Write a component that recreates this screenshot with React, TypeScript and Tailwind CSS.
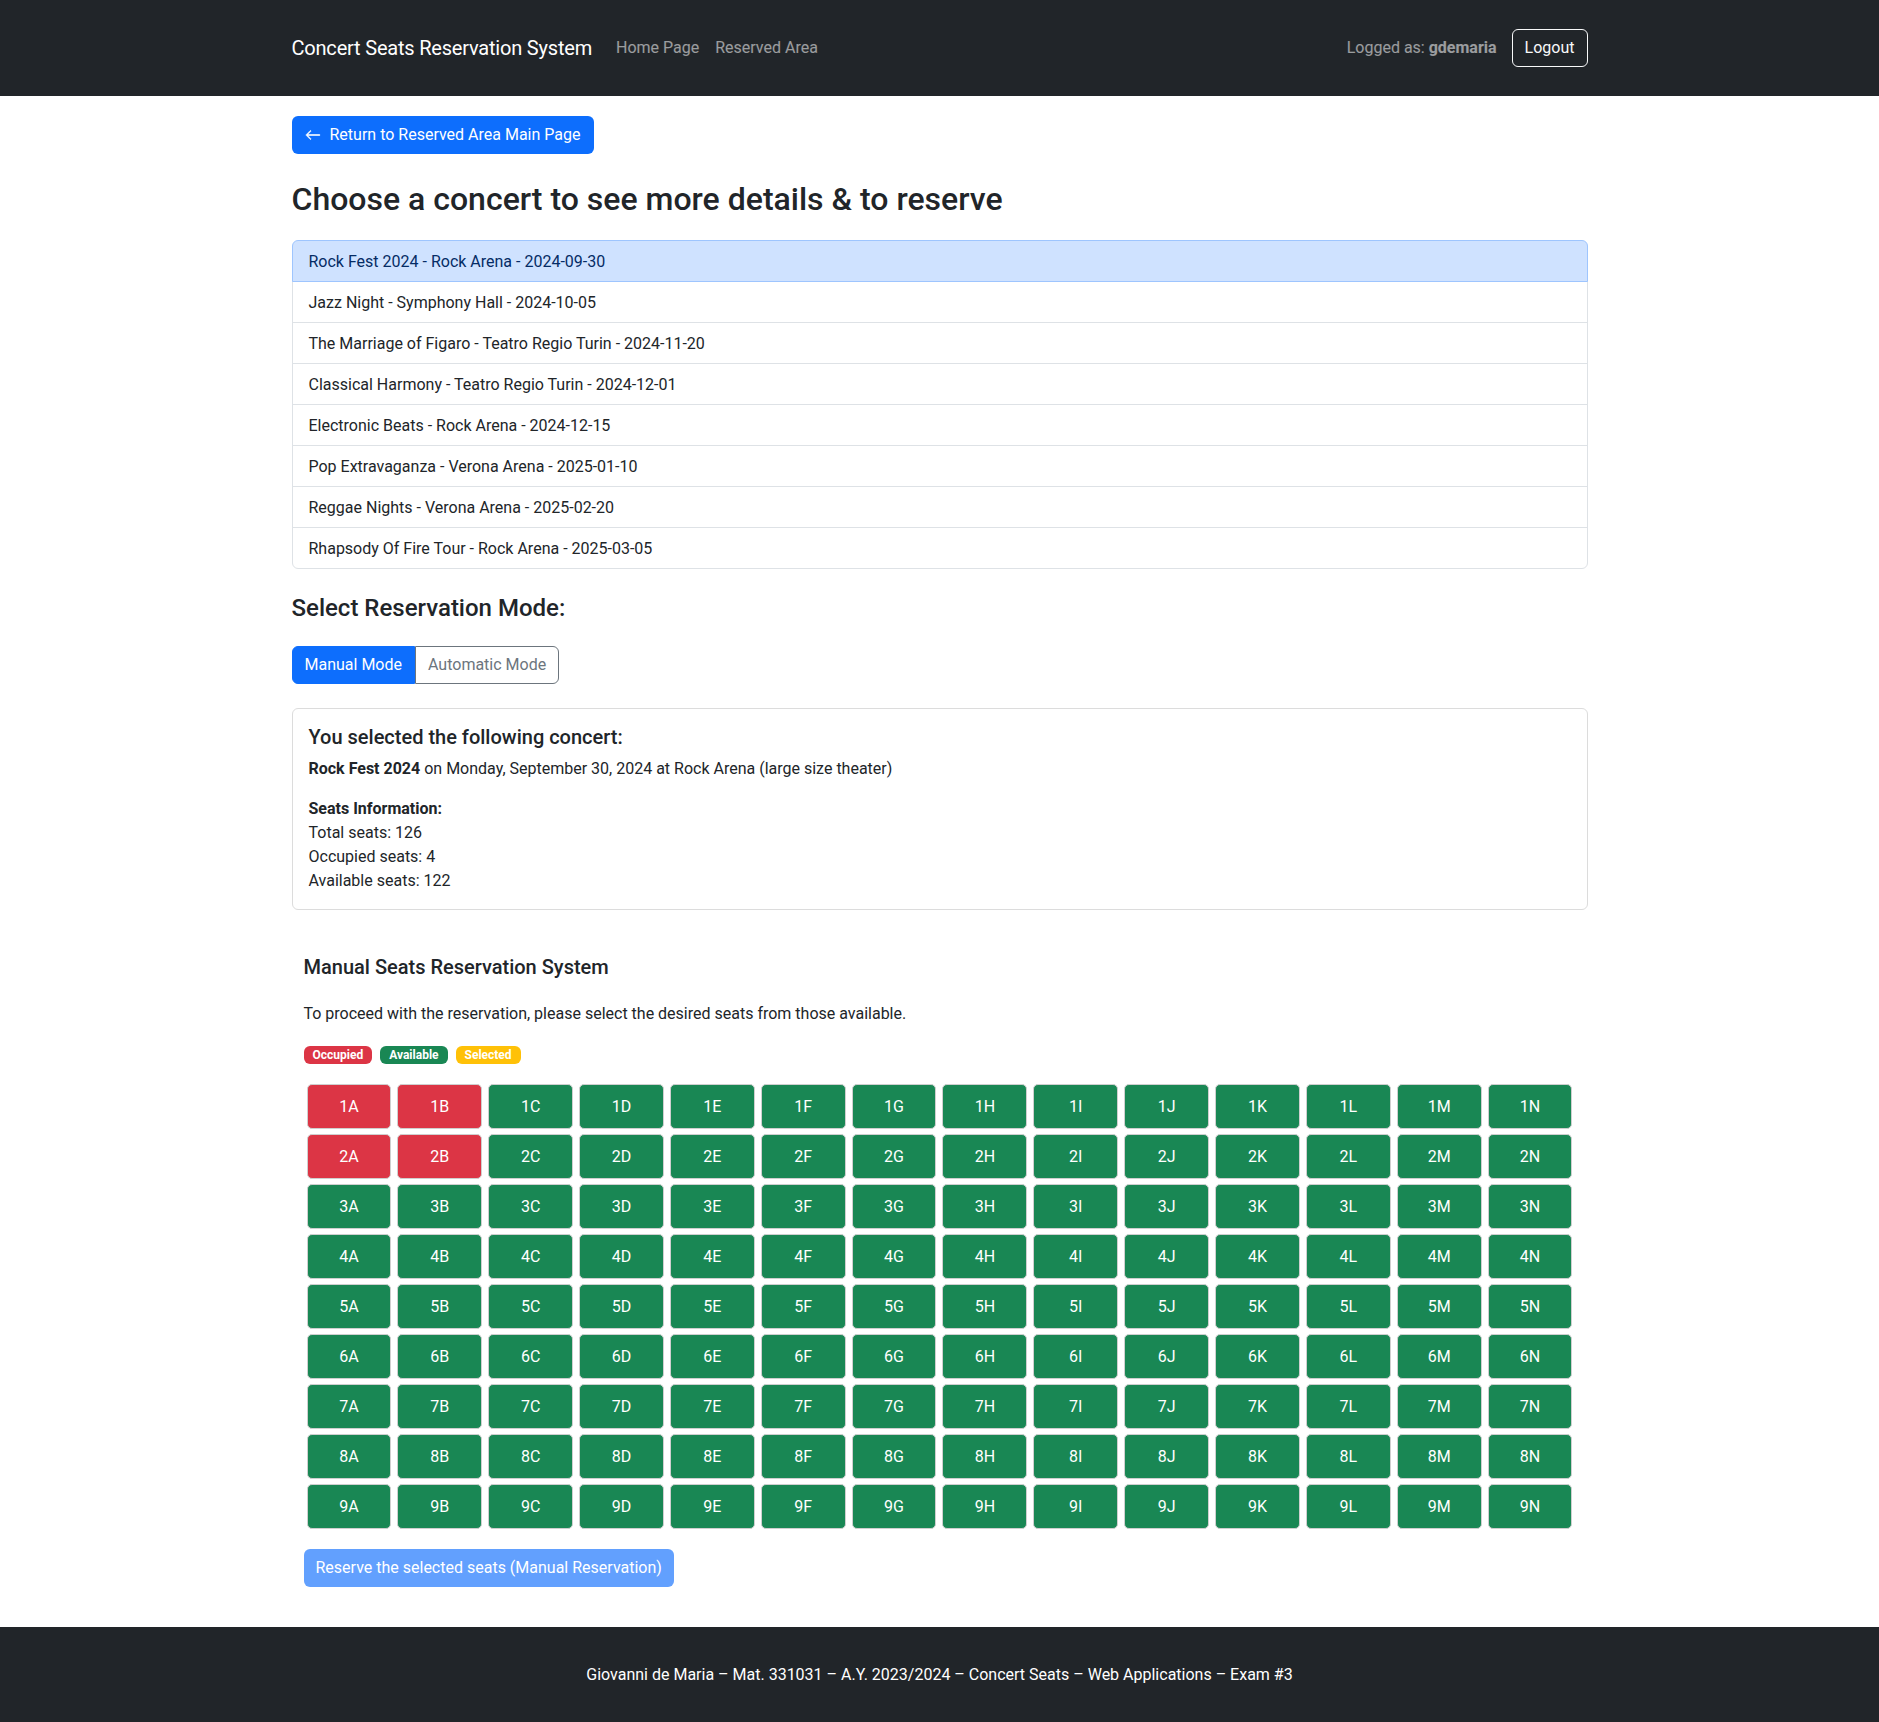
import { BsArrowLeft } from "react-icons/bs";

const concerts = [
  "Rock Fest 2024 - Rock Arena - 2024-09-30",
  "Jazz Night - Symphony Hall - 2024-10-05",
  "The Marriage of Figaro - Teatro Regio Turin - 2024-11-20",
  "Classical Harmony - Teatro Regio Turin - 2024-12-01",
  "Electronic Beats - Rock Arena - 2024-12-15",
  "Pop Extravaganza - Verona Arena - 2025-01-10",
  "Reggae Nights - Verona Arena - 2025-02-20",
  "Rhapsody Of Fire Tour - Rock Arena - 2025-03-05",
];

const rows = [1, 2, 3, 4, 5, 6, 7, 8, 9];
const cols = ["A", "B", "C", "D", "E", "F", "G", "H", "I", "J", "K", "L", "M", "N"];
const occupied = ["1A", "1B", "2A", "2B"];

function Navbar() {
  return (
    <nav className="bg-[#212529] h-24">
      <div className="mx-auto max-w-[1320px] px-3 h-full flex items-center">
        <span className="text-[20px] text-white mr-4 tracking-[-0.2px]">Concert Seats Reservation System</span>
        <a className="px-2 text-white/55">Home Page</a>
        <a className="px-2 text-white/55">Reserved Area</a>
        <div className="ml-auto flex items-center gap-[15px]">
          <span className="text-white/55">
            Logged as: <b className="font-bold">gdemaria</b>
          </span>
          <button className="h-[38px] px-[12px] rounded-md border border-[#f8f9fa] text-[#f8f9fa]">
            Logout
          </button>
        </div>
      </div>
    </nav>
  );
}

function SeatGrid() {
  return (
    <div className="grid grid-cols-14 gap-x-[6px] gap-y-[5px] px-[3px]">
      {rows.map((r) =>
        cols.map((c) => {
          const id = `${r}${c}`;
          const busy = occupied.includes(id);
          return (
            <button
              key={id}
              className={
                busy
                  ? "h-[45px] rounded-[5px] border border-[#cfcfcf] bg-[#dc3545] text-white"
                  : "h-[45px] rounded-[5px] border border-[#cfcfcf] bg-[#198754] text-white"
              }
            >
              {id}
            </button>
          );
        })
      )}
    </div>
  );
}

export default function App() {
  return (
    <div className="min-h-screen bg-white text-[#212529] text-[16px] leading-6 font-['Roboto',sans-serif]">
      <Navbar />
      <main className="mx-auto max-w-[1320px] px-3 pt-5 pb-10">
        <button className="h-[38px] pl-[13px] pr-[14px] flex items-center gap-[9px] rounded-md bg-[#0d6efd] text-white">
          <BsArrowLeft className="w-4 h-4 stroke-[0.6px]" />
          Return to Reserved Area Main Page
        </button>

        <h2 className="mt-[26px] mb-[22px] text-[32px] leading-[38px] font-medium">
          Choose a concert to see more details &amp; to reserve
        </h2>

        <div className="flex flex-col">
          {concerts.map((c, i) => (
            <div
              key={c}
              className={
                i === 0
                  ? "relative z-10 px-4 pt-[9px] pb-[7px] border border-[#9ec5fe] bg-[#cfe2ff] text-[#052c65] rounded-t-md"
                  : i === concerts.length - 1
                  ? "px-4 pt-[9px] pb-[7px] border border-[#dee2e6] -mt-px rounded-b-md"
                  : "px-4 pt-[9px] pb-[7px] border border-[#dee2e6] -mt-px"
              }
            >
              {c}
            </div>
          ))}
        </div>

        <h4 className="mt-[25px] mb-[23px] text-[24px] leading-[29px] font-medium">
          Select Reservation Mode:
        </h4>

        <div className="flex">
          <button className="h-[38px] px-3 rounded-l-md bg-[#0d6efd] border border-[#0d6efd] text-white">
            Manual Mode
          </button>
          <button className="h-[38px] px-3 rounded-r-md border border-[#6c757d] text-[#6c757d]">
            Automatic Mode
          </button>
        </div>

        <div className="mt-6 border border-[#dcdcdc] rounded-md p-4">
          <h5 className="text-[20px] leading-6 font-medium mb-2">You selected the following concert:</h5>
          <p className="mb-4">
            <b className="font-bold">Rock Fest 2024</b> on Monday, September 30, 2024 at Rock Arena (large size
            theater)
          </p>
          <div>
            <b className="font-bold">Seats Information:</b>
            <div>Total seats: 126</div>
            <div>Occupied seats: 4</div>
            <div>Available seats: 122</div>
          </div>
        </div>

        <section className="mt-[45px] px-3">
          <h5 className="text-[20px] leading-6 font-medium">Manual Seats Reservation System</h5>
          <p className="mt-[23px]">
            To proceed with the reservation, please select the desired seats from those available.
          </p>
          <div className="mt-5 flex gap-2">
            <span className="px-[9px] py-[3px] rounded-md bg-[#dc3545] text-white text-[12px] leading-[12px] font-bold">
              Occupied
            </span>
            <span className="px-[9px] py-[3px] rounded-md bg-[#198754] text-white text-[12px] leading-[12px] font-bold">
              Available
            </span>
            <span className="px-[9px] py-[3px] rounded-md bg-[#ffc107] text-white text-[12px] leading-[12px] font-bold">
              Selected
            </span>
          </div>
          <div className="mt-5">
            <SeatGrid />
          </div>
          <button className="mt-5 h-[38px] px-3 rounded-md bg-[#62a0fe] text-white">
            Reserve the selected seats (Manual Reservation)
          </button>
        </section>
      </main>
      <footer className="bg-[#212529] h-24 flex items-center justify-center text-white">
        Giovanni de Maria – Mat. 331031 – A.Y. 2023/2024 – Concert Seats – Web Applications – Exam #3
      </footer>
    </div>
  );
}
